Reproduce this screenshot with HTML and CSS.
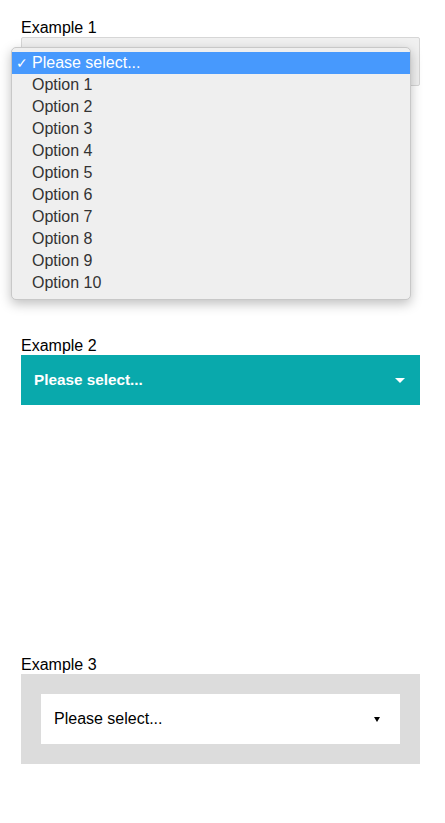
FILE: index.html
```html
<!DOCTYPE html>
<html>
<head>
<meta charset="utf-8">
<link rel="stylesheet" href="styles.css">
</head>
<body>
<div class="page">
  <div class="example">
    <label class="label">Example 1</label>
    <div class="native">
      <div class="menu">
        <div class="opt selected"><span class="check">✓</span>Please select...</div>
        <div class="opt">Option 1</div>
        <div class="opt">Option 2</div>
        <div class="opt">Option 3</div>
        <div class="opt">Option 4</div>
        <div class="opt">Option 5</div>
        <div class="opt">Option 6</div>
        <div class="opt">Option 7</div>
        <div class="opt">Option 8</div>
        <div class="opt">Option 9</div>
        <div class="opt">Option 10</div>
      </div>
    </div>
  </div>
  <div class="example">
    <label class="label">Example 2</label>
    <div class="teal">
      <span>Please select...</span>
      <svg class="caret-teal" width="10" height="5" viewBox="0 0 10 5"><path d="M0 0H10L5 5Z" fill="#fff"/></svg>
    </div>
  </div>
  <div class="example last">
    <label class="label">Example 3</label>
    <div class="grey">
      <div class="white">
        <span>Please select...</span>
        <svg class="caret-small" width="6" height="5" viewBox="0 0 6 5"><path d="M0 0H6L3 5Z" fill="#000"/></svg>
      </div>
    </div>
  </div>
</div>
</body>
</html>
```
FILE: styles.css
```css
* { box-sizing: border-box; }
html, body { margin: 0; padding: 0; background: #fff; }
body { font-family: "Liberation Sans", Arial, sans-serif; font-size: 16px; color: #000; }
.page { padding: 18px 0 0 21px; width: 420px; }
.example { margin-bottom: 250px; }
.example.last { margin-bottom: 0; }
.label { display: block; height: 19px; line-height: 19px; }
.native {
  position: relative;
  height: 49px;
  background: #f0f0f0;
  border: 1px solid #d6d6d6;
  border-radius: 2px;
}
.menu {
  position: absolute;
  left: -11px;
  top: 9px;
  width: 400px;
  padding: 4px 0 5px;
  background: #efefef;
  border: 1px solid #c8c8c8;
  border-radius: 5px;
  box-shadow: 0 4px 12px rgba(0,0,0,0.25);
  z-index: 2;
}
.opt {
  height: 22px;
  line-height: 22px;
  padding-left: 20px;
  color: #333;
  position: relative;
}
.opt.selected { background: #4799fd; color: #fff; }
.check { position: absolute; left: 4px; top: 0; font-size: 14px; }
.teal {
  height: 50px;
  background: #09a9ac;
  color: #fff;
  font-weight: bold;
  font-size: 15.3px;
  display: flex;
  align-items: center;
  justify-content: space-between;
  padding: 0 15px 0 13px;
}
.caret-teal { display: block; margin-top: 1px; }
.grey {
  background: #dcdcdc;
  padding: 20px;
  height: 90px;
}
.white {
  background: #fff;
  height: 50px;
  display: flex;
  align-items: center;
  justify-content: space-between;
  padding: 0 20px 0 13px;
}
.caret-small { display: block; }
```
